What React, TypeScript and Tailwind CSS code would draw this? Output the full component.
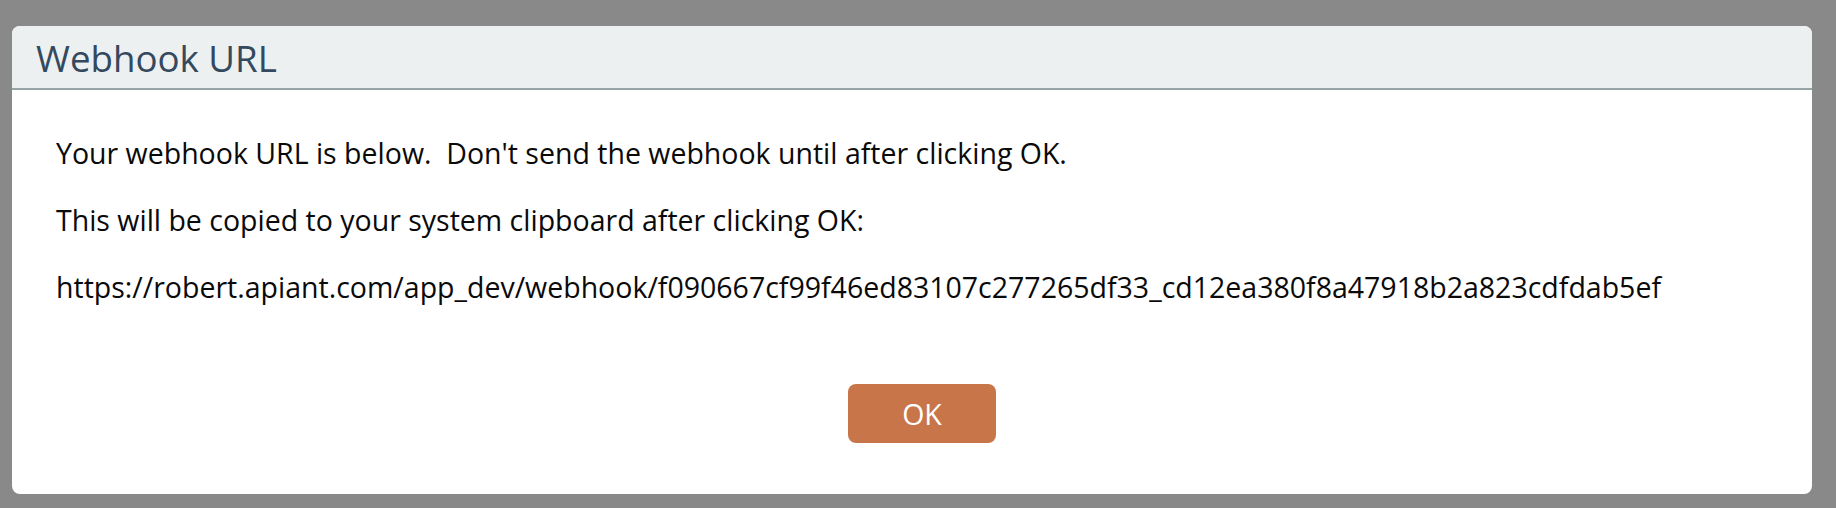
export default function App() {
  return (
    <div className="h-[508px] w-full bg-[#898989] pl-[12px] pt-[26px]">
      <div className="flex h-[468px] w-[1800px] flex-col overflow-hidden rounded-[8px] bg-white font-['Open_Sans',sans-serif]">
        <div className="flex h-[64px] shrink-0 items-center border-b-2 border-[#95a5a6] bg-[#ecf0f1] pl-[24px] pt-[3px]">
          <h1 className="text-[36.7px] leading-none text-[#34495e]">Webhook URL</h1>
        </div>
        <div className="flex flex-1 flex-col pl-[44px] pr-[24px] pt-[43px] text-[28.5px] leading-[40px] text-[#0a0a0a]">
          <p className="whitespace-pre">Your webhook URL is below.  Don't send the webhook until after clicking OK.</p>
          <p className="mt-[27px]">This will be copied to your system clipboard after clicking OK:</p>
          <p className="mt-[27px]">
            https://robert.apiant.com/app_dev/webhook/f090667cf99f46ed83107c277265df33_cd12ea380f8a47918b2a823cdfdab5ef
          </p>
          <div className="mt-[77px] flex justify-center">
            <button className="h-[59px] w-[148px] rounded-[8px] bg-[#c87549] text-[28.5px] text-white">OK</button>
          </div>
        </div>
      </div>
    </div>
  )
}
